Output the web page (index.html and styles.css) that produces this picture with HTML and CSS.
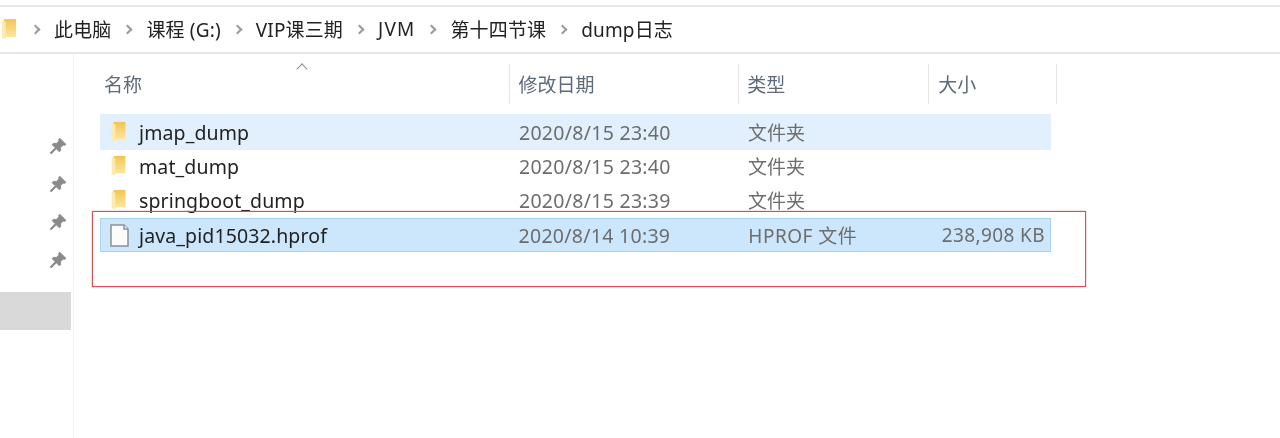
FILE: index.html
```html
<!DOCTYPE html>
<html lang="zh-CN">
<head>
<meta charset="utf-8">
<title>dump日志</title>
<link rel="stylesheet" href="styles.css">
</head>
<body>
<div class="window">
  <nav class="crumbs">
    <svg class="folder crumb-folder" viewBox="0 0 18 24"><defs><linearGradient id="fg" x1="0" y1="0" x2="0" y2="1"><stop offset="0" stop-color="#f1c552"/><stop offset="1" stop-color="#fde6a0"/></linearGradient></defs><path fill="url(#fg)" d="M3 1h13v19H3z"/><path class="f-front" d="M1 2l4 2v18l-4-1z"/></svg>
    <span class="sep"></span><span class="crumb">此电脑</span>
    <span class="sep"></span><span class="crumb">课程 (G:)</span>
    <span class="sep"></span><span class="crumb">VIP课三期</span>
    <span class="sep"></span><span class="crumb wide">JVM</span>
    <span class="sep"></span><span class="crumb">第十四节课</span>
    <span class="sep"></span><span class="crumb">dump日志</span>
  </nav>
  <div class="main">
    <aside class="side">
      <div class="pins">
        <svg class="pin" viewBox="0 0 16 16"><path d="M9.500 1l5.500 5.500-1.400 1-1-.4-2.400 2.400.2 2.500-1.200 1.200-2.700-2.700L2 15l-1-1 4.500-4.500L2.800 6.800 4 5.600l2.500.2 2.400-2.400-.4-1z"/></svg>
        <svg class="pin" viewBox="0 0 16 16"><path d="M9.500 1l5.500 5.500-1.400 1-1-.4-2.400 2.400.2 2.500-1.200 1.200-2.700-2.700L2 15l-1-1 4.500-4.500L2.800 6.800 4 5.600l2.500.2 2.400-2.400-.4-1z"/></svg>
        <svg class="pin" viewBox="0 0 16 16"><path d="M9.500 1l5.500 5.500-1.400 1-1-.4-2.400 2.400.2 2.500-1.200 1.200-2.700-2.700L2 15l-1-1 4.500-4.500L2.800 6.800 4 5.600l2.500.2 2.400-2.400-.4-1z"/></svg>
        <svg class="pin" viewBox="0 0 16 16"><path d="M9.500 1l5.500 5.500-1.400 1-1-.4-2.400 2.400.2 2.500-1.200 1.200-2.700-2.700L2 15l-1-1 4.500-4.500L2.800 6.800 4 5.600l2.500.2 2.400-2.400-.4-1z"/></svg>
      </div>
      <div class="side-active"></div>
    </aside>
    <section class="list">
      <header class="head">
        <div class="hcell c-name">名称<span class="caret"></span></div>
        <div class="hcell c-date">修改日期</div>
        <div class="hcell c-type">类型</div>
        <div class="hcell c-size">大小</div>
      </header>
      <div class="rows">
        <div class="row hover">
          <div class="name"><svg class="folder" viewBox="0 0 18 24"><path fill="url(#fg)" d="M3 1h13v19H3z"/><path class="f-front" d="M1 2l4 2v18l-4-1z"/></svg>jmap_dump</div>
          <div class="date">2020/8/15 23:40</div><div class="type">文件夹</div><div class="size"></div>
        </div>
        <div class="row">
          <div class="name"><svg class="folder" viewBox="0 0 18 24"><path fill="url(#fg)" d="M3 1h13v19H3z"/><path class="f-front" d="M1 2l4 2v18l-4-1z"/></svg>mat_dump</div>
          <div class="date">2020/8/15 23:40</div><div class="type">文件夹</div><div class="size"></div>
        </div>
        <div class="row">
          <div class="name"><svg class="folder" viewBox="0 0 18 24"><path fill="url(#fg)" d="M3 1h13v19H3z"/><path class="f-front" d="M1 2l4 2v18l-4-1z"/></svg>springboot_dump</div>
          <div class="date">2020/8/15 23:39</div><div class="type">文件夹</div><div class="size"></div>
        </div>
        <div class="row selected">
          <div class="name"><svg class="file" viewBox="0 0 19 23"><path d="M1 1h13l4 4v17H1z"/><path d="M14 1v4h4"/></svg>java_pid15032.hprof</div>
          <div class="date">2020/8/14 10:39</div><div class="type">HPROF 文件</div><div class="size">238,908 KB</div>
        </div>
      </div>
    </section>
  </div>
</div>
<div class="annotation"></div>
</body>
</html>
```
FILE: styles.css
```css
* { box-sizing: border-box; }
html, body { margin: 0; height: 438px; overflow: hidden; background: #fff; }
body {
  font-family: "Noto Sans", "Noto Sans CJK SC", sans-serif;
  font-size: 19px;
  position: relative;
}
.window { height: 438px; padding-top: 5px; filter: blur(0.5px); }
.crumbs {
  height: 49px;
  border-top: 2px solid #e6e6e6;
  border-bottom: 2px solid #e6e6e6;
  display: flex;
  align-items: center;
  color: #222;
  letter-spacing: 0.15px;
}
.crumb { position: relative; top: -1px; }
.crumb.wide { letter-spacing: 1.2px; }
.sep {
  width: 7px; height: 7px;
  border-top: 2px solid #9a9a9a;
  border-right: 2px solid #9a9a9a;
  transform: rotate(45deg);
  margin: 0 15px 0 13px;
  flex: none;
}
.crumb-folder + .sep { margin-left: 14px; }
.main { display: flex; height: 384px; }
.side {
  width: 74px;
  border-right: 1px solid #f2f2f2;
  padding-top: 83px;
  flex: none;
}
.pins { display: flex; flex-direction: column; align-items: flex-end; gap: 20px; padding-right: 6px; height: 155px; }
.pin { width: 18px; height: 18px; fill: #8a8a8a; stroke: #8a8a8a; stroke-width: 0.8; }
.side-active { width: 71px; height: 38px; background: #d9d9d9; }
.list { width: 983px; padding: 10px 0 0 26px; flex: none; }
.head { display: flex; height: 40px; color: #5f6b7a; position: relative; }
.hcell { display: flex; align-items: center; padding-left: 9px; border-right: 1px solid #e5e5e5; }
.c-name { width: 410px; padding-left: 4px; }
.c-date { width: 230px; }
.c-type { width: 190px; padding-left: 8px; }
.c-size { width: 128px; }
.caret {
  position: absolute; left: 198px; top: 1px;
  width: 8px; height: 8px;
  border-top: 1.500px solid #8c8c8c;
  border-left: 1.500px solid #8c8c8c;
  transform: rotate(45deg);
}
.rows { margin-top: 10px; width: 951px; }
.row { display: flex; height: 34px; align-items: center; color: #6d6d6d; padding-bottom: 2px; }
.row.hover { height: 36px; background: #e1f0fc; padding-bottom: 0; }
.row.selected { background: #cce6fb; border: 1px solid #a8d2f4; padding-bottom: 0; }
.name { width: 410px; display: flex; align-items: center; color: #222; font-size: 19.500px; letter-spacing: 0.12px; }
.date { width: 229px; padding-left: 9px; font-size: 19.500px; letter-spacing: 0.28px; }
.type { width: 190px; padding-left: 9px; }
.row.selected .type { letter-spacing: 0.5px; padding-left: 10px; }
.size { width: 122px; text-align: right; padding-right: 6px; white-space: nowrap; letter-spacing: 0.4px; }
.row.selected .size { padding-right: 5px; }
.row.selected .name { width: 409px; }
.folder { width: 18px; height: 22px; margin: 0 11px 0 10px; flex: none; }
.crumbs .folder { margin: 0 0 0 1px; height: 23px; width: 17px; }
.f-front { fill: #fdeab0; }
.file { width: 19px; height: 23px; margin: 0 10px 0 9px; flex: none; fill: #fbfbfb; stroke: #8d9097; stroke-width: 1.500; }
.annotation {
  position: absolute; left: 92px; top: 211px;
  width: 994px; height: 76px;
  border: 1px solid #e14a4e;
  box-shadow: 0 0 1px #e14a4e;
}
```
